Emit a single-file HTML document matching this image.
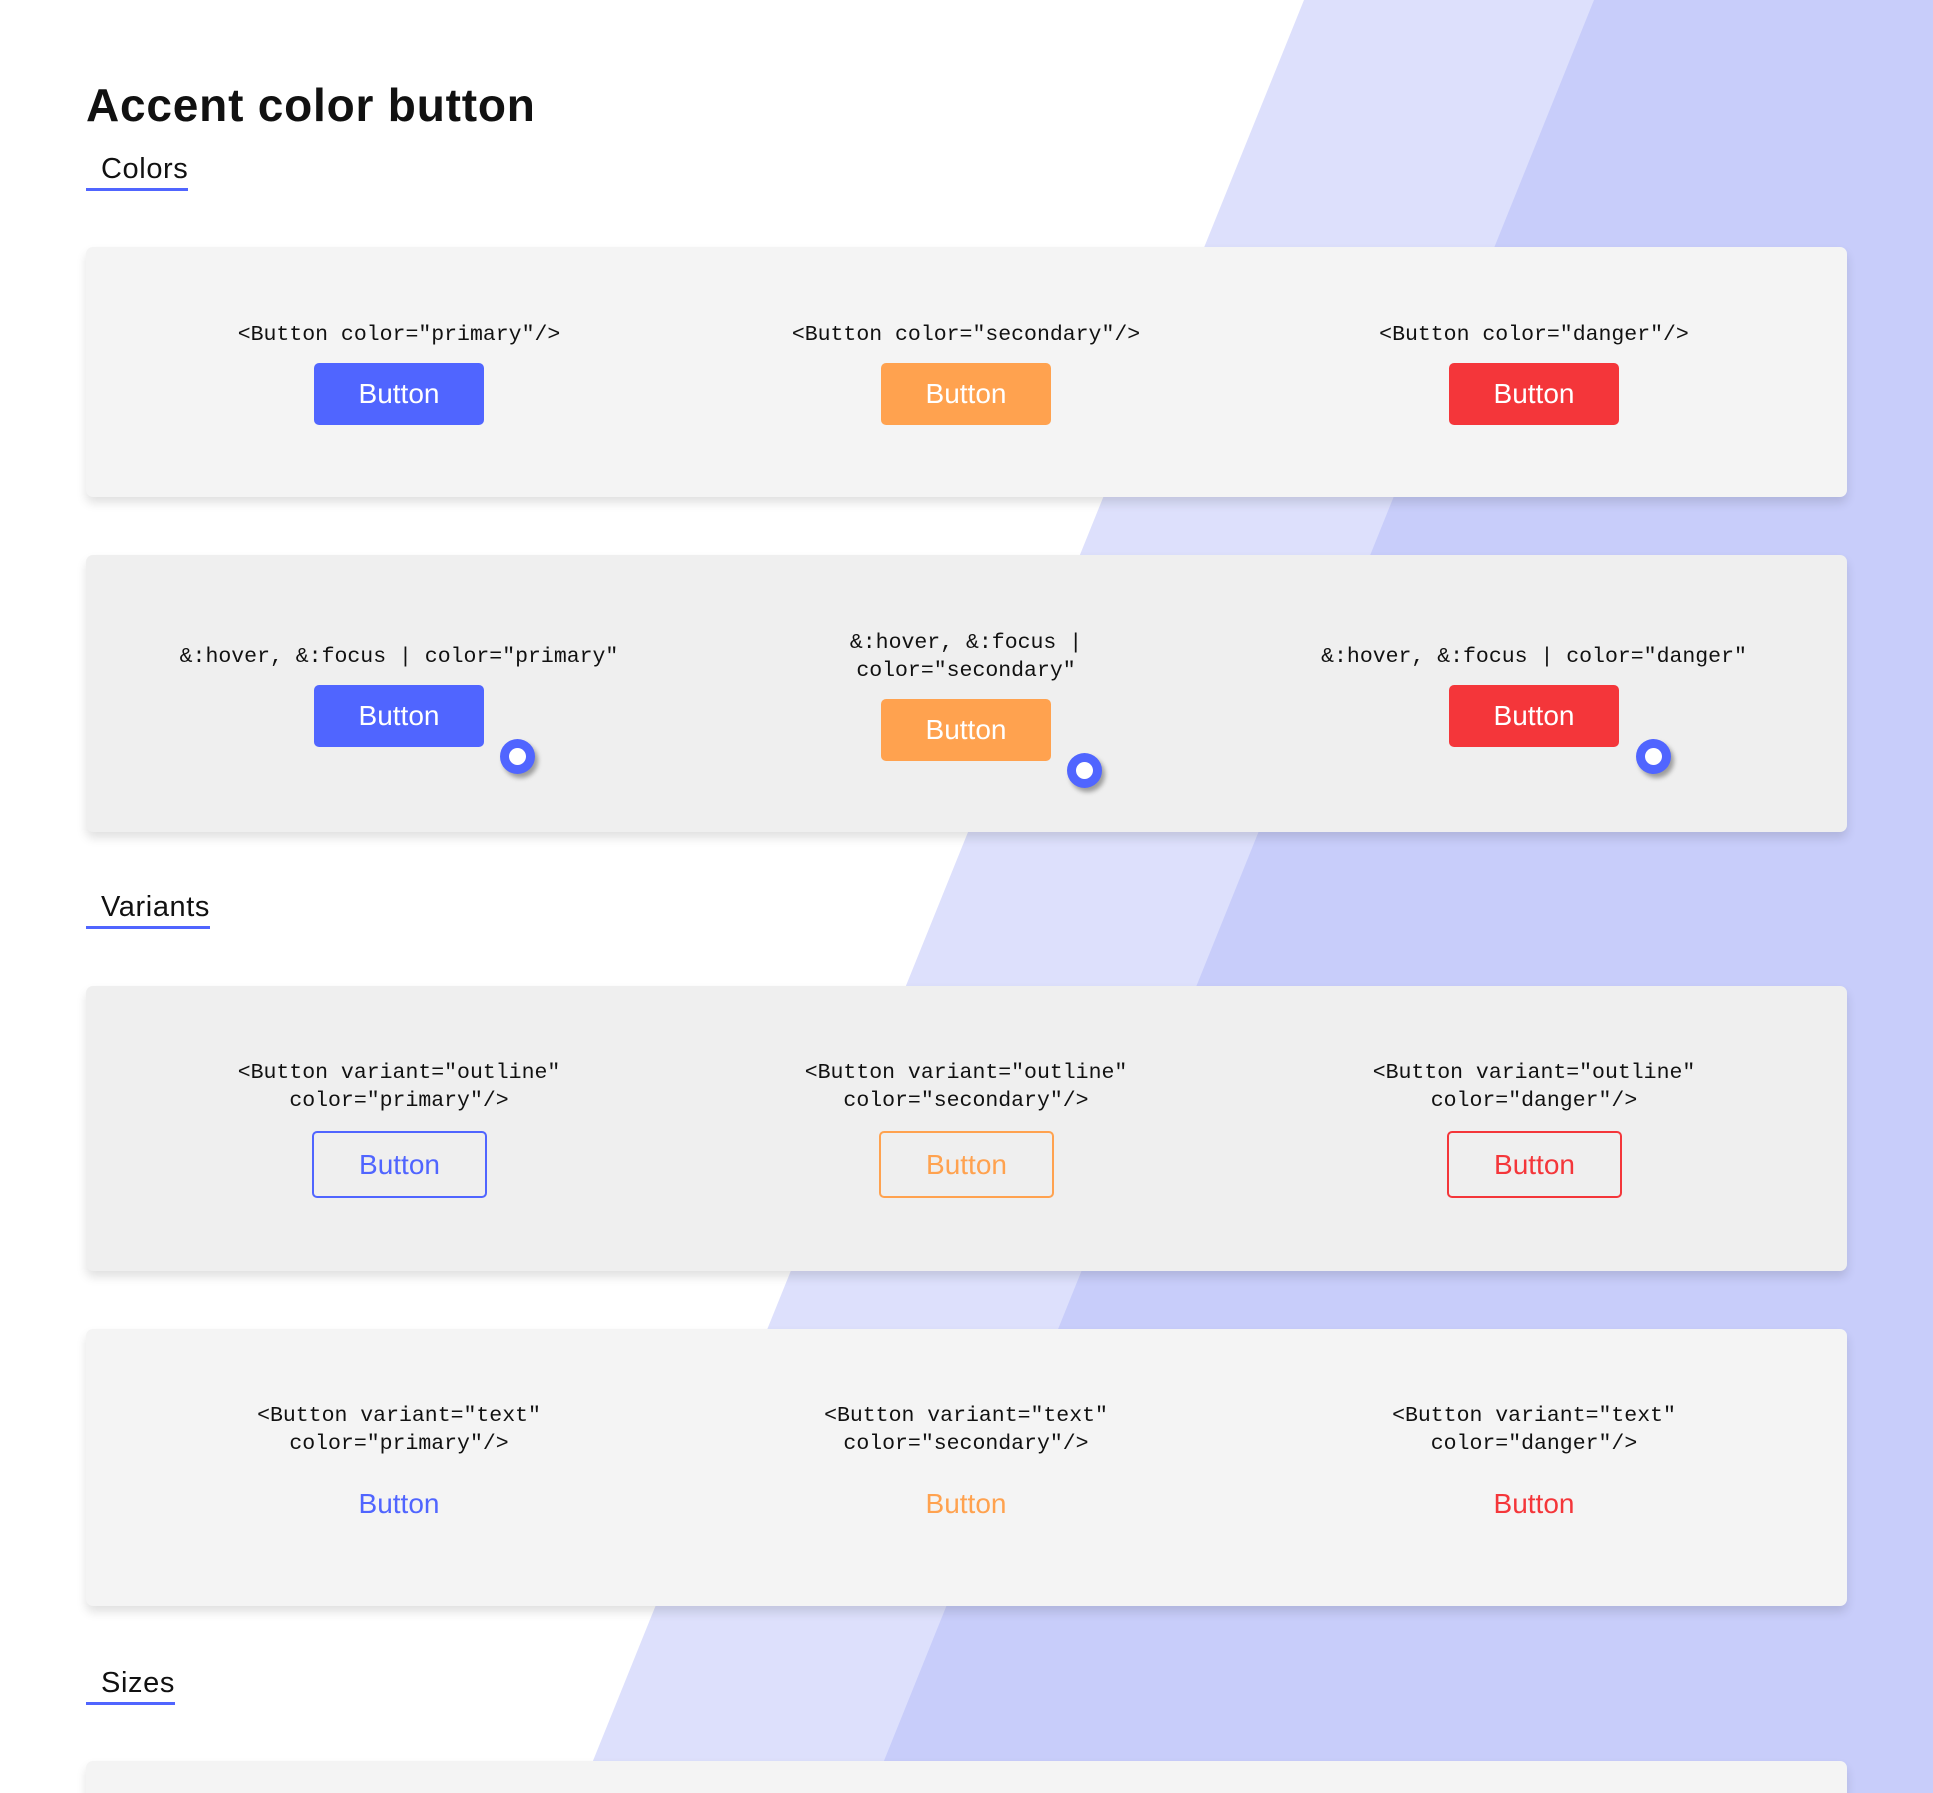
<!DOCTYPE html>
<html><head><meta charset="utf-8">
<style>
html,body{margin:0;padding:0;overflow:hidden;width:1933px;height:1793px}
body{position:relative;background:#fff;font-family:"Liberation Sans",Arial,sans-serif}
.bg{position:absolute;left:0;top:0}
h1{position:absolute;left:86px;top:78px;margin:0;font-size:46px;font-weight:bold;color:#111;letter-spacing:0.8px}
.sec{position:absolute;left:86px;font-size:29px;color:#111;padding:0 0 2px 15px;border-bottom:3px solid #5065ff;line-height:34px;letter-spacing:0.6px}
.card{position:absolute;left:86px;width:1761px;border-radius:7px;box-shadow:0 6px 10px rgba(0,0,0,0.12)}
.col{position:absolute;text-align:center;width:560px;margin-left:-280px}
.code{font-family:"Liberation Mono",monospace;font-size:21.5px;line-height:28px;color:#111;white-space:pre}
.btn{position:absolute;width:170px;height:62px;margin-left:-85px;border-radius:5px;color:#fff;font-size:28px;line-height:62px;text-align:center}
.ob{position:absolute;width:171px;height:63px;margin-left:-87px;border:2px solid;border-radius:5px;font-size:28px;line-height:63px;text-align:center;background:transparent}
.tb{position:absolute;width:170px;margin-left:-85px;font-size:28px;text-align:center;line-height:34px}
.dot{position:absolute;width:35px;height:35px;border-radius:50%;background:#5065ff;box-shadow:3px 4px 5px rgba(0,0,0,0.35)}
.dot:after{content:"";position:absolute;left:9px;top:9px;width:17px;height:17px;border-radius:50%;background:#fff}
.p{background:#5065ff}.s{background:#ffa24f}.d{background:#f4363a}
</style></head><body>
<svg class="bg" width="1933" height="1793">
<polygon points="1304,0 1933,0 1933,1793 580,1793" fill="#dde0fc"/>
<polygon points="1594,0 1933,0 1933,1793 871,1793" fill="#c8cdfa"/>
</svg>
<h1>Accent color button</h1>
<div class="sec" style="top:152px">Colors</div>

<div class="card" style="top:247px;height:250px;background:#f4f4f4"></div>
<div class="col code" style="left:399px;top:321px">&lt;Button color="primary"/&gt;</div>
<div class="col code" style="left:966px;top:321px">&lt;Button color="secondary"/&gt;</div>
<div class="col code" style="left:1534px;top:321px">&lt;Button color="danger"/&gt;</div>
<div class="btn p" style="left:399px;top:363px">Button</div>
<div class="btn s" style="left:966px;top:363px">Button</div>
<div class="btn d" style="left:1534px;top:363px">Button</div>

<div class="card" style="top:555px;height:277px;background:#efefef"></div>
<div class="col code" style="left:399px;top:643px">&amp;:hover, &amp;:focus | color="primary"</div>
<div class="col code" style="left:966px;top:629px">&amp;:hover, &amp;:focus |
color="secondary"</div>
<div class="col code" style="left:1534px;top:643px">&amp;:hover, &amp;:focus | color="danger"</div>
<div class="btn p" style="left:399px;top:685px">Button</div>
<div class="btn s" style="left:966px;top:699px">Button</div>
<div class="btn d" style="left:1534px;top:685px">Button</div>
<div class="dot" style="left:500px;top:739px"></div>
<div class="dot" style="left:1067px;top:753px"></div>
<div class="dot" style="left:1636px;top:739px"></div>

<div class="sec" style="top:890px">Variants</div>

<div class="card" style="top:986px;height:285px;background:#efefef"></div>
<div class="col code" style="left:399px;top:1059px">&lt;Button variant="outline"
color="primary"/&gt;</div>
<div class="col code" style="left:966px;top:1059px">&lt;Button variant="outline"
color="secondary"/&gt;</div>
<div class="col code" style="left:1534px;top:1059px">&lt;Button variant="outline"
color="danger"/&gt;</div>
<div class="ob" style="left:399px;top:1131px;color:#5065ff;border-color:#5065ff">Button</div>
<div class="ob" style="left:966px;top:1131px;color:#ffa24f;border-color:#ffa24f">Button</div>
<div class="ob" style="left:1534px;top:1131px;color:#f4363a;border-color:#f4363a">Button</div>

<div class="card" style="top:1329px;height:277px;background:#f4f4f4"></div>
<div class="col code" style="left:399px;top:1402px">&lt;Button variant="text"
color="primary"/&gt;</div>
<div class="col code" style="left:966px;top:1402px">&lt;Button variant="text"
color="secondary"/&gt;</div>
<div class="col code" style="left:1534px;top:1402px">&lt;Button variant="text"
color="danger"/&gt;</div>
<div class="tb" style="left:399px;top:1487px;color:#5065ff">Button</div>
<div class="tb" style="left:966px;top:1487px;color:#ffa24f">Button</div>
<div class="tb" style="left:1534px;top:1487px;color:#f4363a">Button</div>

<div class="sec" style="top:1666px">Sizes</div>
<div class="card" style="top:1761px;height:32px;border-radius:7px 7px 0 0;background:#f4f4f4"></div>
</body></html>
